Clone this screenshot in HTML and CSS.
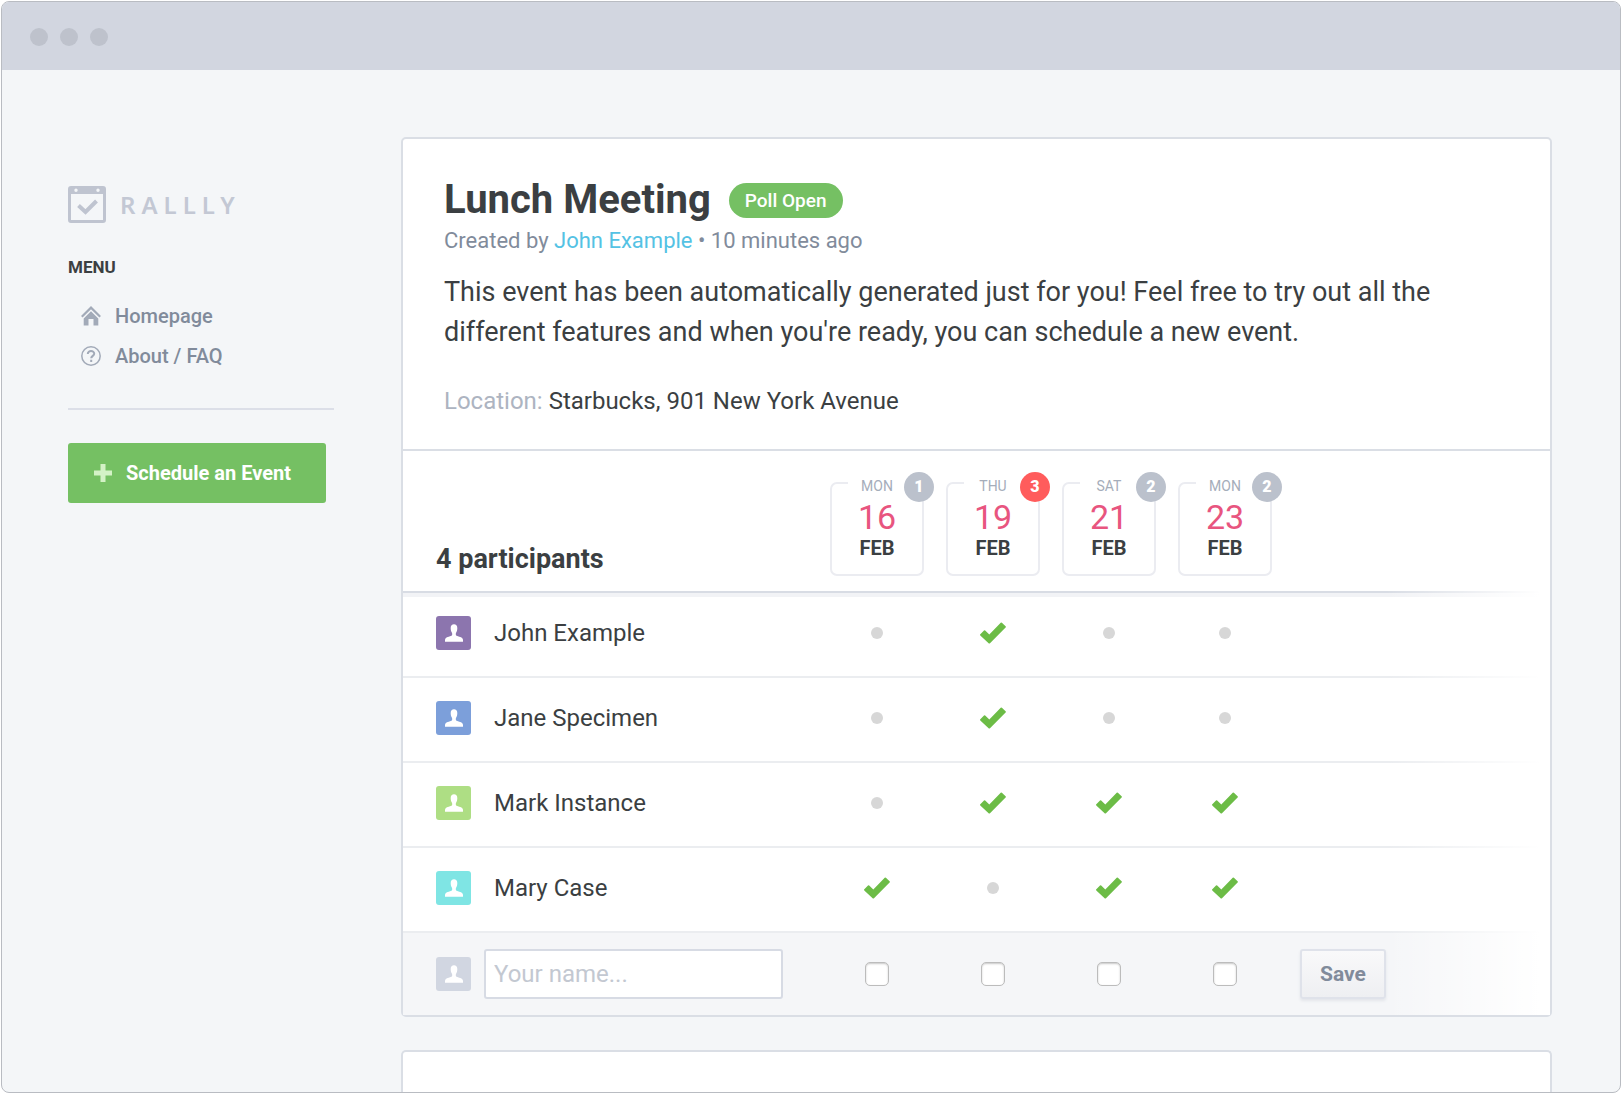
FILE: index.html
```html
<!DOCTYPE html>
<html lang="en">
<head>
<meta charset="utf-8">
<meta name="viewport" content="width=device-width, initial-scale=1">
<title>Lunch Meeting - Rallly</title>
<link rel="stylesheet" href="styles.css">
</head>
<body>
<svg class="sprite" width="0" height="0" aria-hidden="true">
  <symbol id="person" viewBox="0 0 18 18"><path d="M9 .3C7 .3 5.700 1.600 5.700 4c0 1.700.3 3.300 1.100 4.400.3.500.4 1 .4 1.900 0 1-.5 1.500-1.500 1.800C3 13 .3 13.600 0 15.700V17.700h18v-2c-.3-2.100-3-2.700-5.700-3.600-1-.3-1.500-.8-1.500-1.800 0-.9.1-1.400.4-1.900.8-1.100 1.100-2.700 1.100-4.400C12.300 1.600 11 .3 9 .3z"/></symbol>
  <symbol id="check" viewBox="0 0 26 22"><path d="M.3 12.200 4 8.500q.6-.6 1.200 0L9.300 12.400 20.700.7q.6-.6 1.200 0L25.600 4.300q.6.600 0 1.200L10 21.300q-.7.600-1.400 0L.3 13.400q-.6-.6 0-1.200z"/></symbol>
</svg>
<div class="window">
  <div class="titlebar"><span></span><span></span><span></span></div>
  <div class="content">
    <aside class="sidebar">
      <a class="logo" href="#">
        <svg width="38" height="38" viewBox="0 0 38 38" aria-hidden="true">
          <path fill="#bfc4d0" fill-rule="evenodd" d="M3 0h32a3 3 0 0 1 3 3v31a3 3 0 0 1-3 3H3a3 3 0 0 1-3-3V3a3 3 0 0 1 3-3zM3 8v26h32V8zM8 2.500a1.700 1.700 0 1 0 0 3.400 1.700 1.700 0 0 0 0-3.400zm22 0a1.700 1.700 0 1 0 0 3.400 1.700 1.700 0 0 0 0-3.400z"/>
          <path fill="none" stroke="#bfc4d0" stroke-width="4" d="M10.500 19.500 17.500 26 28.500 15"/>
        </svg>
        <span>RALLLY</span>
      </a>
      <h2 class="menu-title">MENU</h2>
      <nav class="menu">
        <a href="#">
          <svg width="20" height="20" viewBox="0 0 20 20" aria-hidden="true"><path fill="none" stroke="#a2aab8" stroke-width="2.200" d="M.8 10.800 10 1.600l9.200 9.200"/><path fill="#a2aab8" d="M10 5.300 17.300 12.500V19.500H12.500V13h-5v6.500H2.700V12.500z"/></svg>
          Homepage
        </a>
        <a href="#">
          <svg width="20" height="20" viewBox="0 0 20 20" fill="none" stroke="#a2aab8" aria-hidden="true"><circle cx="10" cy="10" r="9.200" stroke-width="1.500"/><path stroke-width="2" d="M6.800 8c0-4.200 6.500-3.700 6.400-.3 0 2.100-3 2.300-3 4.600M10.200 13.700v2.200"/></svg>
          About / FAQ
        </a>
      </nav>
      <hr>
      <button class="schedule" type="button">
        <svg width="18" height="18" viewBox="0 0 18 18" aria-hidden="true"><path fill="#d3f2c6" d="M6.500 0h5v6.500H18v5h-6.500V18h-5v-6.500H0v-5h6.500z"/></svg>
        Schedule an Event
      </button>
    </aside>
    <main class="main">
      <article class="card">
        <header class="event">
          <div class="title-row">
            <h1>Lunch Meeting</h1>
            <span class="status">Poll Open</span>
          </div>
          <p class="byline">Created by <a href="#">John Example</a> • 10 minutes ago</p>
          <p class="description">This event has been automatically generated just for you! Feel free to try out all the different features and when you're ready, you can schedule a new event.</p>
          <p class="location"><span>Location:</span> Starbucks, 901 New York Avenue</p>
        </header>
        <form class="poll">
          <table>
            <colgroup><col class="col-name"><col class="col-date"><col class="col-date"><col class="col-date"><col class="col-date"><col></colgroup>
            <thead>
              <tr>
                <th class="count" scope="col">4 participants</th>
                <th scope="col"><div class="date"><span class="day">MON</span><span class="num">16</span><span class="month">FEB</span><span class="votes">1</span></div></th>
                <th scope="col"><div class="date"><span class="day">THU</span><span class="num">19</span><span class="month">FEB</span><span class="votes top">3</span></div></th>
                <th scope="col"><div class="date"><span class="day">SAT</span><span class="num">21</span><span class="month">FEB</span><span class="votes">2</span></div></th>
                <th scope="col"><div class="date"><span class="day">MON</span><span class="num">23</span><span class="month">FEB</span><span class="votes">2</span></div></th>
                <td></td>
              </tr>
            </thead>
            <tbody>
              <tr>
                <th scope="row"><div class="person"><span class="avatar purple"><svg><use href="#person"/></svg></span>John Example</div></th>
                <td><span class="no"></span></td>
                <td><svg class="yes"><use href="#check"/></svg></td>
                <td><span class="no"></span></td>
                <td><span class="no"></span></td>
                <td></td>
              </tr>
              <tr>
                <th scope="row"><div class="person"><span class="avatar blue"><svg><use href="#person"/></svg></span>Jane Specimen</div></th>
                <td><span class="no"></span></td>
                <td><svg class="yes"><use href="#check"/></svg></td>
                <td><span class="no"></span></td>
                <td><span class="no"></span></td>
                <td></td>
              </tr>
              <tr>
                <th scope="row"><div class="person"><span class="avatar green"><svg><use href="#person"/></svg></span>Mark Instance</div></th>
                <td><span class="no"></span></td>
                <td><svg class="yes"><use href="#check"/></svg></td>
                <td><svg class="yes"><use href="#check"/></svg></td>
                <td><svg class="yes"><use href="#check"/></svg></td>
                <td></td>
              </tr>
              <tr>
                <th scope="row"><div class="person"><span class="avatar cyan"><svg><use href="#person"/></svg></span>Mary Case</div></th>
                <td><svg class="yes"><use href="#check"/></svg></td>
                <td><span class="no"></span></td>
                <td><svg class="yes"><use href="#check"/></svg></td>
                <td><svg class="yes"><use href="#check"/></svg></td>
                <td></td>
              </tr>
            </tbody>
            <tfoot>
              <tr>
                <td><div class="entry"><span class="avatar"><svg><use href="#person"/></svg></span><input class="name" type="text" placeholder="Your name..." aria-label="Your name"></div></td>
                <td><input type="checkbox" aria-label="Monday 16 February"></td>
                <td><input type="checkbox" aria-label="Thursday 19 February"></td>
                <td><input type="checkbox" aria-label="Saturday 21 February"></td>
                <td><input type="checkbox" aria-label="Monday 23 February"></td>
                <td class="actions"><button class="save" type="button">Save</button></td>
              </tr>
            </tfoot>
          </table>
        </form>
      </article>
      <section class="card next"></section>
    </main>
  </div>
</div>
</body>
</html>
```
FILE: styles.css
```css
* { box-sizing: border-box; }

body {
  margin: 0;
  background: #fff;
  color: #3b3f42;
  font-family: Roboto, "Liberation Sans", sans-serif;
}

h1, h2, p { margin: 0; }
a { text-decoration: none; }
svg { display: block; }
.sprite { position: absolute; }

.window {
  display: flex;
  flex-direction: column;
  height: calc(100vh - 2px);
  margin: 1px;
  overflow: hidden;
  border: 1px solid #b9bcc2;
  border-radius: 8px;
  background: #f4f6f8;
}

.titlebar {
  display: flex;
  flex: none;
  align-items: center;
  gap: 12px;
  height: 68px;
  padding: 2px 0 0 28px;
  background: #d2d6e0;
}
.titlebar span {
  width: 18px;
  height: 18px;
  border-radius: 50%;
  background: #bec2cc;
}

.content {
  display: flex;
  flex: 1;
  gap: 67px;
  padding: 67px 68px 0 66px;
}

/* Sidebar */
.sidebar {
  flex: none;
  width: 266px;
  padding-top: 49px;
}
.logo {
  display: flex;
  align-items: center;
  gap: 14px;
  color: #c3c8d4;
  font: 600 24px/36px "Noto Sans", sans-serif;
  letter-spacing: 6px;
}
.menu-title {
  margin-top: 30px;
  font-size: 17px;
  line-height: 26px;
}
.menu {
  display: flex;
  flex-direction: column;
  margin-top: 16px;
  padding-left: 13px;
}
.menu a {
  display: flex;
  align-items: center;
  gap: 14px;
  color: #818b9b;
  font-size: 20px;
  font-weight: 500;
  line-height: 40px;
}
.sidebar hr {
  height: 2px;
  margin: 32px 0 33px;
  border: 0;
  background: #dcdfe8;
}
.schedule {
  display: flex;
  align-items: center;
  gap: 14px;
  width: 258px;
  height: 60px;
  padding: 0 26px;
  border: 0;
  border-radius: 3px;
  background: #75c063;
  color: #fff;
  font: 700 20px/60px Roboto, sans-serif;
  white-space: nowrap;
}

/* Event card */
.main {
  display: flex;
  flex: 1;
  flex-direction: column;
  gap: 33px;
  min-width: 0;
}
.card {
  border: 2px solid #dadee5;
  border-radius: 5px;
  background: #fff;
}
.next {
  flex: 1;
  border-bottom: 0;
  border-radius: 5px 5px 0 0;
}
.event {
  padding: 37px 41px 32px;
  border-bottom: 2px solid #dadee5;
}
.title-row {
  display: flex;
  align-items: center;
  gap: 18px;
}
h1 {
  font-size: 40px;
  line-height: 48px;
}
.status {
  padding: 0 16px;
  border-radius: 18px;
  background: #75c063;
  color: #fff;
  font-size: 19px;
  font-weight: 500;
  line-height: 35px;
}
.byline {
  color: #818b9b;
  font-size: 22px;
  line-height: 34px;
}
.byline a { color: #54c2e4; }
.description {
  margin-top: 14px;
  font-size: 27px;
  line-height: 40px;
}
.location {
  margin-top: 33px;
  font-size: 24px;
  line-height: 32px;
}
.location span { color: #adb4c1; }

/* Poll table */
.poll { position: relative; }
.poll::after {
  position: absolute;
  top: 0;
  right: 0;
  bottom: 0;
  width: 164px;
  background: linear-gradient(to right, rgba(255, 255, 255, 0), #fff 94%);
  content: "";
  pointer-events: none;
}
table {
  width: 100%;
  border-collapse: separate;
  border-spacing: 0;
  table-layout: fixed;
}
.col-name { width: 416px; }
.col-date { width: 116px; }
th, td {
  padding: 0;
  font-weight: 400;
  text-align: center;
}
thead th, thead td {
  height: 142px;
  border-bottom: 2px solid #d8dce4;
  vertical-align: top;
}
thead .count {
  padding: 0 0 16px 33px;
  font-size: 27px;
  font-weight: 700;
  line-height: 32px;
  text-align: left;
  vertical-align: bottom;
}
.date {
  position: relative;
  display: flex;
  flex-direction: column;
  align-items: center;
  width: 94px;
  height: 94px;
  margin: 31px auto 0;
  border: 2px solid #ebecf1;
  border-radius: 7px;
}
.day {
  width: 58px;
  margin-top: -8px;
  background: #fff;
  color: #a5adba;
  font-size: 14px;
  line-height: 20px;
}
.num {
  color: #e8557f;
  font-size: 34px;
  line-height: 42px;
}
.month {
  font-size: 20px;
  font-weight: 700;
  line-height: 20px;
}
.votes {
  position: absolute;
  top: -12px;
  right: -12px;
  width: 30px;
  height: 30px;
  border-radius: 50%;
  background: #bbc1cc;
  color: #fff;
  font-size: 16px;
  font-weight: 900;
  line-height: 30px;
}
.top { background: #ff5c5c; }

tbody th, tbody td {
  height: 85px;
  padding-bottom: 3px;
  border-bottom: 2px solid #ebedf0;
}
tbody tr:first-child > * { box-shadow: inset 0 4px #f2f3f6; }
.person, .entry {
  display: flex;
  align-items: center;
  padding-left: 33px;
}
.person {
  gap: 23px;
  font-size: 24px;
  line-height: 36px;
}
.entry { gap: 13px; }
.avatar {
  display: grid;
  flex: none;
  width: 35px;
  height: 34px;
  border-radius: 3px;
  background: #d1d6e1;
  place-items: center;
}
.avatar svg {
  width: 18px;
  height: 18px;
  fill: #fff;
}
.purple { background: #8c75ae; }
.blue { background: #7c9fda; }
.green { background: #aede84; }
.cyan { background: #7fe5e4; }
.no {
  display: block;
  width: 12px;
  height: 12px;
  margin: auto;
  border-radius: 50%;
  background: #d7d7d7;
}
.yes {
  width: 26px;
  height: 22px;
  margin: auto;
  fill: #6cbc46;
}

tfoot td {
  height: 82px;
  background: #f5f6f8;
}
.name {
  width: 299px;
  height: 50px;
  padding: 0 8px;
  border: 2px solid #d7dbe4;
  border-radius: 3px;
  background: #fff;
  color: #3b3f42;
  font: 24px/32px Roboto, sans-serif;
}
.name::placeholder { color: #c3c8d1; }
input[type="checkbox"] {
  display: block;
  width: 24px;
  height: 24px;
  margin: auto;
  appearance: none;
  border: 1px solid #bcbcbc;
  border-radius: 5px;
  background: #fff;
  box-shadow: inset 0 1px 2px #c8c8c8;
}
input[type="checkbox"]:checked { background: #6cbc46; }
tfoot .actions {
  padding-left: 17px;
  text-align: left;
}
.save {
  display: block;
  width: 86px;
  height: 50px;
  padding: 0;
  border: 2px solid #dfe2ea;
  border-radius: 3px;
  background: linear-gradient(#f9f9fa, #eeeff2);
  box-shadow: 0 2px 3px #e3e5ea;
  color: #818b9b;
  font: 700 21px/44px Roboto, sans-serif;
}
```
